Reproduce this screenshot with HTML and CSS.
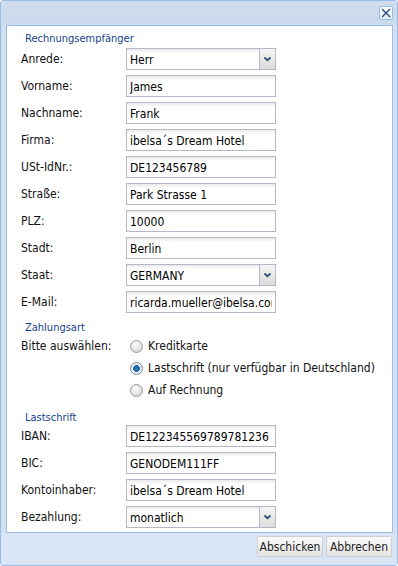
FILE: index.html
```html
<!DOCTYPE html>
<html lang="de">
<head>
    <meta charset="UTF-8">
    <meta name="viewport" content="width=device-width, initial-scale=1.0">
    <title>Zahlungsdaten</title>
    <link rel="stylesheet" href="styles.css">
</head>
<body>

<div class="window">
    <div class="win-header">
        <button class="win-close" type="button" title="Schließen">
            <svg width="10" height="10" viewBox="0 0 10 10"><path d="M1 1L9 9M9 1L1 9" stroke="#2c4a78" stroke-width="1.4"/></svg>
        </button>
    </div>

    <form class="win-body">
        <div class="section-title first">Rechnungsempfänger</div>

        <div class="field">
            <label>Anrede:</label>
            <div class="combo"><input type="text" value="Herr" readonly><span class="trigger"><svg width="9" height="6" viewBox="0 0 9 6"><path d="M1.5 1.5L4.5 4.3L7.5 1.5" fill="none" stroke="#2c4a78" stroke-width="1.8"/></svg></span></div>
        </div>
        <div class="field">
            <label>Vorname:</label>
            <input type="text" value="James">
        </div>
        <div class="field">
            <label>Nachname:</label>
            <input type="text" value="Frank">
        </div>
        <div class="field">
            <label>Firma:</label>
            <input type="text" value="ibelsa´s Dream Hotel">
        </div>
        <div class="field">
            <label>USt-IdNr.:</label>
            <input type="text" value="DE123456789">
        </div>
        <div class="field">
            <label>Straße:</label>
            <input type="text" value="Park Strasse 1">
        </div>
        <div class="field">
            <label>PLZ:</label>
            <input type="text" value="10000">
        </div>
        <div class="field">
            <label>Stadt:</label>
            <input type="text" value="Berlin">
        </div>
        <div class="field">
            <label>Staat:</label>
            <div class="combo"><input type="text" value="GERMANY" readonly><span class="trigger"><svg width="9" height="6" viewBox="0 0 9 6"><path d="M1.5 1.5L4.5 4.3L7.5 1.5" fill="none" stroke="#2c4a78" stroke-width="1.8"/></svg></span></div>
        </div>
        <div class="field">
            <label>E-Mail:</label>
            <input type="text" value="ricarda.mueller@ibelsa.com">
        </div>

        <div class="section-title second">Zahlungsart</div>

        <div class="radio-field">
            <label class="radio-label">Bitte auswählen:</label>
            <div class="radio-list">
                <label class="radio"><input type="radio" name="pay"> Kreditkarte</label>
                <label class="radio"><input type="radio" name="pay" checked> Lastschrift (nur verfügbar in Deutschland)</label>
                <label class="radio"><input type="radio" name="pay"> Auf Rechnung</label>
            </div>
        </div>

        <div class="section-title third">Lastschrift</div>

        <div class="field">
            <label>IBAN:</label>
            <input type="text" value="DE122345569789781236">
        </div>
        <div class="field">
            <label>BIC:</label>
            <input type="text" value="GENODEM111FF">
        </div>
        <div class="field">
            <label>Kontoinhaber:</label>
            <input type="text" value="ibelsa´s Dream Hotel">
        </div>
        <div class="field">
            <label>Bezahlung:</label>
            <div class="combo"><input type="text" value="monatlich" readonly><span class="trigger"><svg width="9" height="6" viewBox="0 0 9 6"><path d="M1.5 1.5L4.5 4.3L7.5 1.5" fill="none" stroke="#2c4a78" stroke-width="1.8"/></svg></span></div>
        </div>
    </form>

    <div class="win-footer">
        <button type="button" class="btn">Abschicken</button>
        <button type="button" class="btn">Abbrechen</button>
    </div>
</div>

</body>
</html>
```

FILE: styles.css
```css
body {
    margin: 0;
    font-family: 'DejaVu Sans Condensed', 'DejaVu Sans', sans-serif;
    font-stretch: condensed;
    font-size: 12px;
    color: #111;
    background: #fff;
}
.window {
    width: 398px;
    height: 566px;
    box-sizing: border-box;
    border: 1px solid #99bbe8;
    border-radius: 3px;
    background: #d3e0f1;
    display: flex;
    flex-direction: column;
}
.win-header {
    height: 24px;
    display: flex;
    justify-content: flex-end;
    align-items: flex-start;
    padding: 5px 4px 0 0;
    box-sizing: border-box;
    background: linear-gradient(to bottom, #d0ddee, #cbd9ec);
}
.win-close {
    width: 14px;
    height: 14px;
    padding: 0;
    border: 1px solid #99bbe8;
    border-radius: 2px;
    background: linear-gradient(to bottom, #fbfdff, #e3ecf7);
    display: flex;
    align-items: center;
    justify-content: center;
    cursor: pointer;
}
.win-body {
    margin: 0 4px 0 5px;
    height: 508px;
    box-sizing: border-box;
    border: 1px solid #99bbe8;
    background: #fff;
    padding: 0 0 0 14px;
    display: flex; /* column flow, so margins do not collapse */
    flex-direction: column;
}
.section-title {
    color: #15428b;
    font-size: 11px;
    line-height: 14px;
    padding-left: 4px;
}
.section-title.first {
    margin: 6px 0 2px;
}
.section-title.second {
    margin: 3px 0 0;
}
.section-title.third {
    margin: 10px 0 0;
}
.field {
    display: flex;
    align-items: center;
    height: 22px;
    margin-bottom: 5px;
    flex: none;
}
.field label,
.radio-label {
    width: 105px;
    flex: none;
}
.field input,
.combo {
    width: 150px;
    height: 22px;
    box-sizing: border-box;
}
input[type="text"] {
    border: 1px solid #b5b8c8;
    background: linear-gradient(to bottom, #e9e9e9 0, #fff 4px);
    padding: 1px 3px 0;
    font-family: inherit;
    font-stretch: condensed;
    font-size: 12px;
    color: #000;
    outline: none;
}
.combo {
    display: flex;
}
.combo input {
    flex: 1;
    width: auto;
    min-width: 0;
    border-right: none;
}
.combo .trigger {
    width: 17px;
    flex: none;
    box-sizing: border-box;
    border: 1px solid #b5b8c8;
    background: linear-gradient(to bottom, #f5f5f5, #dcdcdc);
    display: flex;
    align-items: center;
    justify-content: center;
}
.radio-field {
    display: flex;
    align-items: flex-start;
}
.radio-label {
    line-height: 22px;
}
.radio-list {
    display: flex;
    flex-direction: column;
}
.radio {
    height: 22px;
    display: flex;
    align-items: center;
    gap: 5px;
    padding-left: 4px;
}
.radio input {
    appearance: none;
    -webkit-appearance: none;
    margin: 0;
    width: 13px;
    height: 13px;
    border-radius: 50%;
    border: 1px solid #9a9a9a;
    background: radial-gradient(circle at 40% 35%, #ffffff, #dcdcdc 70%);
    box-sizing: border-box;
}
.radio input:checked {
    background: radial-gradient(circle, #2a86c8 0, #155a99 3px, #dce8f2 3.6px, #eef2f6 6px);
    border-color: #7b8b9c;
}
.win-footer {
    flex: 1;
    display: flex;
    justify-content: flex-end;
    align-items: flex-start;
    gap: 3px;
    padding: 3px 5px 0 0;
    background: #d9e5f4;
}
.btn {
    width: 66px;
    height: 21px;
    padding: 0;
    border: 1px solid #d0d0d0;
    border-radius: 2px;
    background: linear-gradient(to bottom, #fafafa, #e4e4e4);
    font-family: inherit;
    font-stretch: condensed;
    font-size: 12px;
    color: #222;
    cursor: pointer;
}
.btn:hover {
    background: linear-gradient(to bottom, #fff, #ececec);
}
```
